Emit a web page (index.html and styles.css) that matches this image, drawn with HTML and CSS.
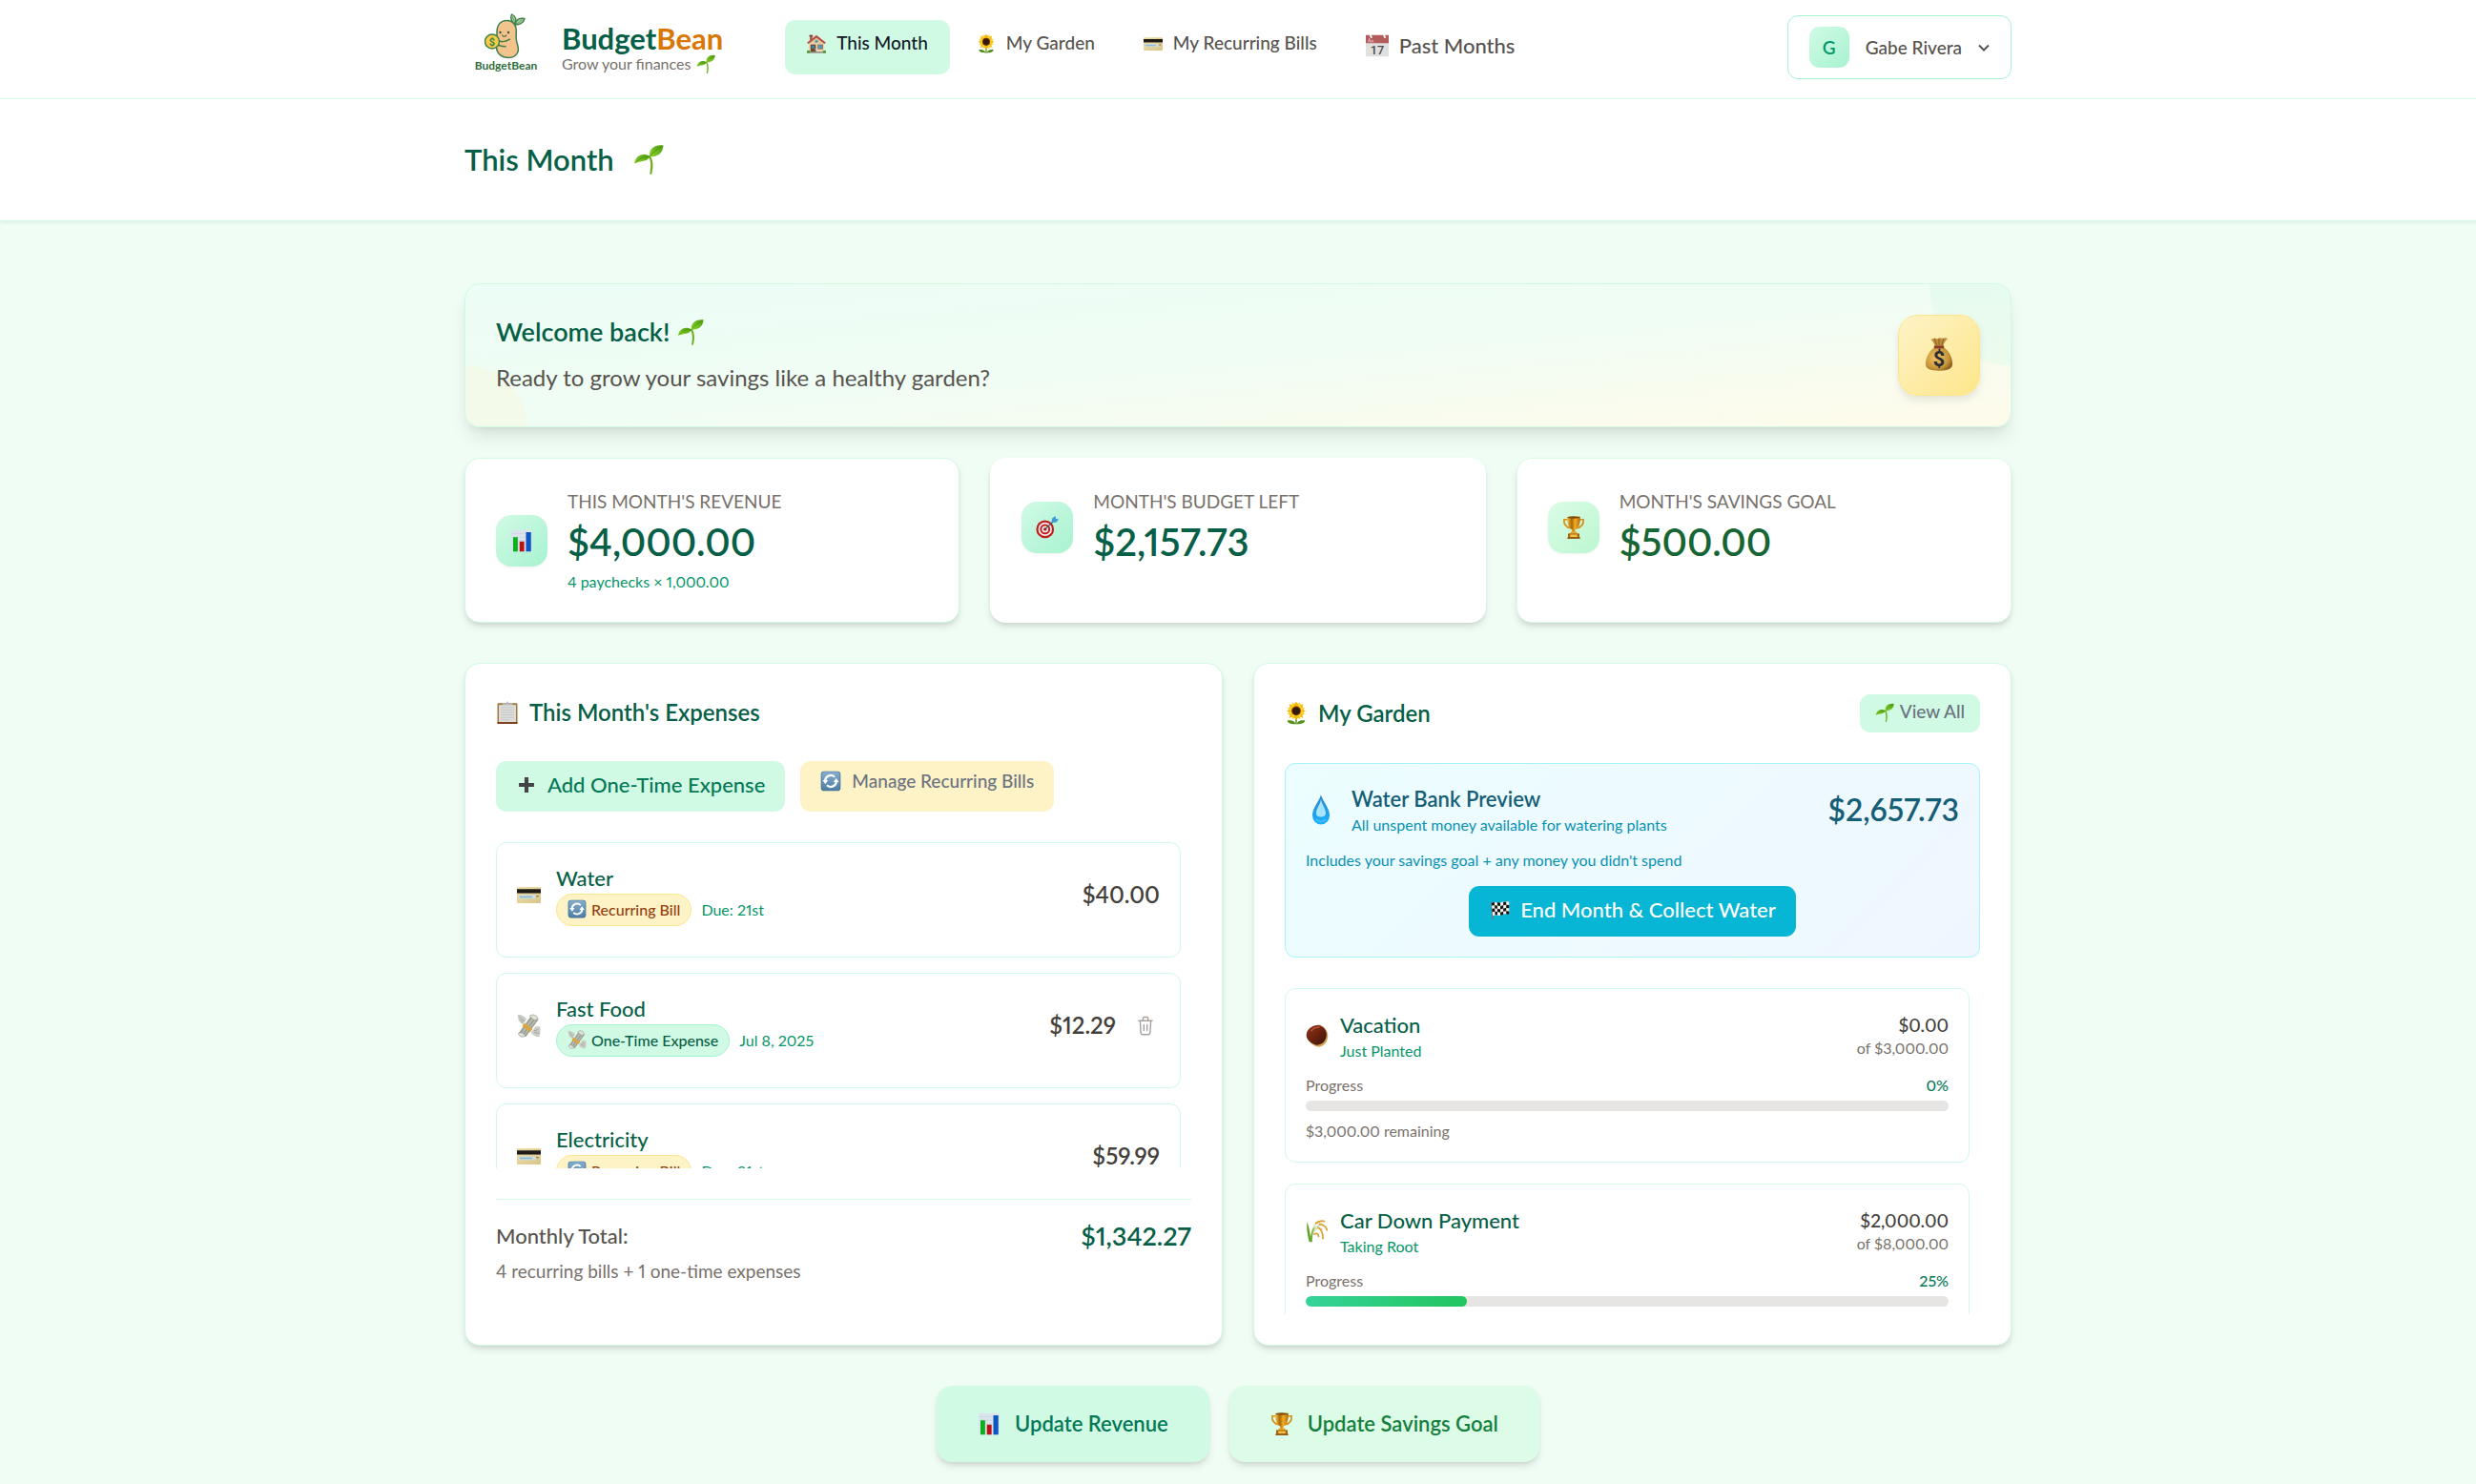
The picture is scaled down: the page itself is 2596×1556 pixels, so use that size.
FILE: index.html
```html
<!DOCTYPE html>
<html lang="en">
<head>
<meta charset="utf-8">
<meta name="viewport" content="width=device-width, initial-scale=1">
<title>BudgetBean - This Month</title>
<link rel="stylesheet" href="styles.css">
</head>
<body>
<svg class="sprite" aria-hidden="true">
  <defs>
    <linearGradient id="leafGrad" x1="0" y1="1" x2="1" y2="0"><stop offset="0" stop-color="#8ed62c"/><stop offset="1" stop-color="#4b9a10"/></linearGradient>
    <linearGradient id="dropGrad" x1="0" y1="0" x2="0" y2="1"><stop offset="0" stop-color="#2a86c8"/><stop offset="1" stop-color="#1cb1ff"/></linearGradient>
    <linearGradient id="goldGrad" x1="0" y1="0" x2="1" y2="0"><stop offset="0" stop-color="#f8c33c"/><stop offset=".35" stop-color="#a8660a"/><stop offset=".6" stop-color="#f3ad22"/><stop offset="1" stop-color="#b06c10"/></linearGradient>
    <linearGradient id="cardGrad" x1="0" y1="0" x2="1" y2="1"><stop offset="0" stop-color="#efe0a8"/><stop offset="1" stop-color="#d8c48a"/></linearGradient>
    <linearGradient id="blueGrad" x1="0" y1="0" x2="0" y2="1"><stop offset="0" stop-color="#86aecd"/><stop offset="1" stop-color="#4e7ea6"/></linearGradient>
    <radialGradient id="bagGrad" cx=".4" cy=".45" r=".65"><stop offset="0" stop-color="#f0c565"/><stop offset=".7" stop-color="#c8963c"/><stop offset="1" stop-color="#8a5c1c"/></radialGradient>
    <linearGradient id="nutGrad" x1="0" y1="0" x2="1" y2="1"><stop offset="0" stop-color="#8e3518"/><stop offset=".5" stop-color="#6a230e"/><stop offset="1" stop-color="#3b1206"/></linearGradient>
  </defs>
  <symbol id="i-seedling" viewBox="0 0 32 32">
    <path d="M16 13c2.600 5 2.800 11 1.200 18.500l2 .300C21.300 24 21 17 17.500 12z" fill="#6cae1e"/>
    <path d="M1 20.500C2.500 12 10 8.500 17.500 13 14 19.500 8.500 16.800 1 20.500z" fill="url(#leafGrad)"/>
    <path d="M17 13.500C16 5.500 22 .500 31.500 1.500 31 10.500 24.500 13.500 17 13.500z" fill="url(#leafGrad)"/>
    <path d="M17 13.500c3.500-4.500 7-7.500 12-10.500M2.500 19.500c4-4.500 9-6.500 14.500-6" fill="none" stroke="#3f8a0c" stroke-width=".7"/>
  </symbol>
  <symbol id="i-house" viewBox="0 0 32 32">
    <path d="M3 13h26v16H3z" fill="#ead9b4"/><path d="M3 13l13-8 13 8v3H3z" fill="#e2cd9f"/>
    <path d="M5 2h4v9H5z" fill="#a8554a"/><path d="M4 1h6v3H4z" fill="#8a3f36"/>
    <path d="M0 14L16 1l16 13-2.500 2L16 5.800 2.500 16z" fill="#b65246"/>
    <circle cx="16" cy="11.500" r="2.400" fill="#4a8fb5"/>
    <path d="M6 17h9v13H6z" fill="#6c4a31"/><path d="M8 19h5v5H8z" fill="#3e7fa0"/><circle cx="13.500" cy="25" r=".8" fill="#f3d27a"/>
    <path d="M18 17h9v8h-9z" fill="#8c5a3c"/><path d="M19 18h7v6h-7z" fill="#57a0c8"/><path d="M22.200 18h.9v6h-.9z" fill="#8c5a3c"/>
    <path d="M1 29h30v2.500H1z" fill="#8e8a80"/><path d="M0 27h5v4H0zM27 27h5v4h-5z" fill="#5d9a2c"/>
  </symbol>
  <symbol id="i-sunflower" viewBox="0 0 32 32">
    <path d="M15 20h2v11h-2z" fill="#5b8f1c"/>
    <path d="M15 31C11 31 5 31 3.500 26 9 24.500 14 26.500 15.500 31zM17 31c4 0 10 0 11.500-5C23 24.500 18 26.500 16.500 31z" fill="#558f1d"/>
    <g fill="#f5b80e"><path d="M16 -1l3 7h-6zM16 26l3-7h-6zM2.500 12.500l7-3v6zM29.500 12.500l-7-3v6zM6 2.500l7 3-4 4zM26 2.500l-7 3 4 4zM6 22.500l7-3-4-4zM26 22.500l-7-3 4-4z"/><circle cx="16" cy="12.500" r="10.800"/></g>
    <g fill="#ffd426"><path d="M11 0l3.500 7-5 1zM21 0l-3.500 7 5 1zM3.200 7.500l7 1-1.200 4.500zM28.800 7.500l-7 1 1.200 4.500zM3.200 17.500l7-1-1.200-4.500zM28.800 17.500l-7-1 1.200-4.500zM11 25l3.500-7-5-1zM21 25l-3.500-7 5-1z"/></g>
    <circle cx="16" cy="12.500" r="6.500" fill="#6b3a0a"/><circle cx="16" cy="12.500" r="5" fill="#371a05"/>
  </symbol>
  <symbol id="i-card" viewBox="0 0 32 32">
    <rect x="0" y="5" width="32" height="22" rx="1.500" fill="url(#cardGrad)"/><path d="M0 8h32v5.500H0z" fill="#1f1b18"/>
    <path d="M3 16h22v5H3z" fill="#c9dce0"/><path d="M4 18.500c1.500-2 2.500 2 4 0s2.500 2 4 0 2.500 2 4 0 2.500 2 4 0" fill="none" stroke="#5b9cc8" stroke-width="1.200"/><path d="M26 17.500h3" stroke="#8a6a3a" stroke-width="1.500"/>
  </symbol>
  <symbol id="i-chart" viewBox="0 0 32 32">
    <path d="M2 1h28v30H2z" fill="#dbe3ec"/><path d="M2 6h28M2 11h28M2 16h28M2 21h28M2 26h28" stroke="#c6d2e0" stroke-width=".8"/>
    <path d="M4 11h6.500v20H4z" fill="#0bb01e"/><path d="M13 17h6.500v14H13z" fill="#bd1114"/><path d="M22 4h7v27h-7z" fill="#0a56c2"/>
  </symbol>
  <symbol id="i-target" viewBox="0 0 32 32">
    <circle cx="13" cy="18.500" r="12.500" fill="#c21c1c"/><circle cx="13" cy="18.500" r="9.600" fill="#f6eeee"/><circle cx="13" cy="18.500" r="7.200" fill="#c21c1c"/><circle cx="13" cy="18.500" r="4.600" fill="#f6eeee"/><circle cx="13" cy="18.500" r="2.300" fill="#b01414"/>
    <path d="M13 18.500L25 7" stroke="#40576a" stroke-width="1.600"/><path d="M22 9l1-6 4.500-3 .5 4 4 .8-3.500 4.200z" fill="#3c9ad4"/>
  </symbol>
  <symbol id="i-trophy" viewBox="0 0 32 32">
    <path d="M8 5H2.500C2 12 6 16 12 17M24 5h5.500c.5 7-3.500 11-9.500 12" fill="none" stroke="#d3921d" stroke-width="2.300"/>
    <path d="M7 1h18c.5 9-1.500 16-7 18.500v4h-4v-4C8.500 17 6.500 10 7 1z" fill="url(#goldGrad)"/><ellipse cx="16" cy="2" rx="9" ry="1.600" fill="#7c4c08"/>
    <path d="M12 22h8l1.500 3h-11z" fill="#e8a624"/><path d="M8 24.500h16V31H8z" fill="#a8640e"/><path d="M11 26h10v3.400H11z" fill="#f2c34b"/><path d="M7 30h18v1.800H7z" fill="#8a5108"/>
  </symbol>
  <symbol id="i-clipboard" viewBox="0 0 32 32">
    <rect x="2" y="3" width="28" height="29" rx="1.500" fill="#a3763c"/><path d="M4 5.500h24v24H4z" fill="#dcdcda"/><path d="M6.500 9h19M6.500 12.500h19M6.500 16h19M6.500 19.500h19M6.500 23h19M6.500 26.500h12" stroke="#c0c0c2" stroke-width="1"/>
    <path d="M2 29.500h28V32H2z" fill="#7b3c18"/><path d="M9 5.500V3.200h5L16 0l2 3.200h5v2.300z" fill="#b6bcc0"/>
  </symbol>
  <symbol id="i-plus" viewBox="0 0 32 32"><path d="M13 4.500h6V13h8.500v6H19v8.500h-6V19H4.500v-6H13z" fill="#434347"/></symbol>
  <symbol id="i-refresh" viewBox="0 0 32 32">
    <rect x="1" y="1" width="30" height="30" rx="5" fill="#3f6c92"/><rect x="2" y="1.800" width="28" height="28" rx="4.500" fill="url(#blueGrad)"/>
    <path d="M7.500 15A8.500 8.500 0 0 1 22 9.800M24.500 17A8.500 8.500 0 0 1 10 22.200" fill="none" stroke="#fff" stroke-width="3.200"/><path d="M3.500 14.500h8.500l-4.200 6zM28.500 17.500H20l4.200-6z" fill="#fff"/>
  </symbol>
  <symbol id="i-wings" viewBox="0 0 32 32">
    <path d="M1 1c5 0 9 2 12 6l-5 7C4 13 1 8 1 1zM31 17c1 6 0 11-1 14-5 0-9-2-11-6l6-8z" fill="#c9cdc6"/><path d="M3 4l7 6M4 8l5 4M29 21l-6 2M30 26l-7-1" stroke="#8e948a" stroke-width=".8"/>
    <path d="M2 26L20 1l9 6L12 31z" fill="#b5b8ac"/><path d="M4 26L20 4M8 28L25 5M11 30L28 8" stroke="#7c8274" stroke-width="1"/>
    <path d="M10 12l11 8-3 4.500L7 16.500z" fill="#dba544"/><path d="M17 3c3-3 10-2 11 3-2 3-5 3-7 1zM2 26c3-2 8 0 9 4-3 2-9 1-9-4z" fill="#dfe1d8" stroke="#8e948a" stroke-width=".8"/>
  </symbol>
  <symbol id="i-drop" viewBox="0 0 32 32">
    <path d="M16 .5c2 7 9 13.500 9 21.500a9 9.500 0 0 1-18 0C7 14 14 7.500 16 .5z" fill="url(#dropGrad)"/><path d="M16 5c1 6 5 10 5 14.500 0 3-2 4-5 4s-5-1-5-4C11 15 15 11 16 5z" fill="#a9e4fb"/><path d="M11 26c3 3 7 3 10 0" fill="none" stroke="#57c9ff" stroke-width="1.200"/>
  </symbol>
  <symbol id="i-flag" viewBox="0 0 32 32">
    <path d="M3 5l1.800-.5L7 30H5z" fill="#777"/><path d="M4 5c5-3 9 2 14 0s8-2 13-1v19c-5-1-8-1-12 1s-8-2-13 1z" fill="#f1f1ee"/>
    <g fill="#151515"><path d="M4 5l4.500-1 .3 5-4.500.6zM13 4.500l4.500.8v4.900l-4.500-.8zM22 4l4.500-.5v4.800L22 9zM8.800 9l4.200.4v4.800l-4-.4zM17.500 10.200L22 9v4.800l-4.500 1.300zM26.500 8.300l4.500.4v4.800l-4.500-.4zM4.700 14.300l4.300-.5.3 4.700-4.200.6zM13 14.200l4.500.9v4.800l-4.500-.9zM22 13.800l4.500-.7v4.700l-4.500.8zM9.300 18.500l3.700.5v4.900l-3.500-.4zM17.500 19.900l4.500-1.300v4.700l-4.500 1.200zM26.500 17.800l4.500.4V23l-4.500-.5z"/></g>
  </symbol>
  <symbol id="i-nut" viewBox="0 0 32 32">
    <path d="M3 13C4 5 12 1 20 1c6 2 11 8 11 15 0 8-5 15-13 15.500C9 31 2 22 3 13z" fill="#cfa257"/><path d="M1 14C2 6 10 1 18 1c7 2 12 8 11 15-1 8-7 13-14 13C7 27 0 21 1 14z" fill="url(#nutGrad)"/><path d="M8 9c3-4 7-5 11-5" stroke="#b8573a" stroke-width="1.800" fill="none" stroke-linecap="round"/>
  </symbol>
  <symbol id="i-rice" viewBox="0 0 32 32">
    <path d="M5 31C2 20 1 10 2 3c3 8 5 18 5 28zM7 31c-1-8 1-16 6-22-3 8-4 14-4 22z" fill="#62a529"/>
    <g fill="none" stroke-linecap="round"><path d="M8 22C9 9 15 2 24 2M9 18C13 8 20 6 27 9M9 20c4-9 10-10 14-7" stroke="#9dbb4a" stroke-width="1"/><path d="M14 5c4-3 8-4 12-3M19 6c5 0 9 3 11 9M17 11c4 1 7 7 7 15M12 20c3-2 6 0 6 3" stroke="#dba238" stroke-width="2.400" stroke-dasharray="2.500 1.500"/></g>
  </symbol>
  <symbol id="i-trash" viewBox="0 0 24 28">
    <path d="M2.500 7h19M4.500 7l1 17a2.500 2.500 0 0 0 2.500 2.300h8a2.500 2.500 0 0 0 2.500-2.300l1-17M8.500 7V3.500A1.500 1.500 0 0 1 10 2h4a1.500 1.500 0 0 1 1.500 1.500V7M9.800 12.500v8M14.200 12.500v8" fill="none" stroke="currentColor" stroke-width="1.900" stroke-linecap="round" stroke-linejoin="round"/>
  </symbol>
</svg>

<nav class="topbar" aria-label="Main">
  <div class="container topbar-inner">
    <a class="brand" href="#">
      <svg class="brand-logo" viewBox="0 0 86 80" role="img" aria-label="BudgetBean logo">
        <path d="M34 24C34 15 39 11.500 44.500 11.500c6.500 0 10 5 9.800 11.500-.1 5-.8 8 .7 12 1.300 3.500 2.500 7 .5 10.500-2 3.600-5.500 5-9 5C39 50.500 33.500 46 33.500 39c0-5 .5-10 .5-15z" fill="#f2c48b" stroke="#3f7d4c" stroke-width="1.500"/>
        <path d="M53 15.500C49.500 13 47.500 9.500 49.500 5c4 1.500 5.500 5.500 3.500 10.500zM53 15.500c1-5 4.500-7 10-6-1 4.500-5 7-10 6z" fill="#a8d59c" stroke="#3f7d4c" stroke-width="1.300"/>
        <path d="M53 15.500c-.5-3-2-6-3-8M53 15.500c3-1 5-3 7.500-4.500" stroke="#3f7d4c" stroke-width=".7" fill="none"/>
        <circle cx="37.500" cy="24" r="1.200" fill="#35513b"/><circle cx="46" cy="24" r="1.200" fill="#35513b"/><path d="M39.500 26.500c.5 2.400 4 2.400 4.500 0" stroke="#35513b" stroke-width="1.100" fill="none"/>
        <circle cx="29" cy="33.500" r="7.500" fill="#f7cd46" stroke="#3f7d4c" stroke-width="1.400"/><text x="29" y="37.500" text-anchor="middle" class="coin-sign">$</text>
        <path d="M36.500 33c3 1.200 7 .6 11-1.800M36 37.500c3 1 5 1.200 7 1.200" stroke="#3f7d4c" stroke-width="1.400" fill="none" stroke-linecap="round"/>
        <text x="43.500" y="63" text-anchor="middle" class="logo-word">BudgetBean</text>
      </svg>
      <span class="brand-text">
        <span class="brand-name">Budget<span class="brand-accent">Bean</span></span>
        <span class="brand-tag">Grow your finances <svg class="ico-20"><use href="#i-seedling"/></svg></span>
      </span>
    </a>
    <div class="nav-links">
      <a class="nav-link active" href="#" aria-current="page"><svg class="ico-20"><use href="#i-house"/></svg>This Month</a>
      <a class="nav-link" href="#"><svg class="ico-20"><use href="#i-sunflower"/></svg>My Garden</a>
      <a class="nav-link" href="#"><svg class="ico-20"><use href="#i-card"/></svg>My Recurring Bills</a>
      <a class="nav-link large" href="#"><svg class="ico-24" viewBox="0 0 32 32">
        <path d="M0 1h32v12H0z" fill="#b25c5c"/><path d="M0 12.500h32V31H0z" fill="#e0e0de"/>
        <path d="M6 0l2 5M25 0l2 5" stroke="#fff" stroke-width="2.600"/><path d="M3 11c2-1 1-5 2-5s0 5 2 5 1-3 2-3 0 3 2 3" fill="none" stroke="#f1d4d4" stroke-width="1"/>
        <text x="16" y="28" text-anchor="middle" class="cal-day">17</text></svg>Past Months</a>
    </div>
    <button class="user-menu" type="button" aria-haspopup="true"><span class="avatar">G</span>Gabe Rivera
      <svg class="chevron" viewBox="0 0 12 8"><path d="M1 1.500l5 5 5-5" fill="none" stroke="currentColor" stroke-width="2"/></svg>
    </button>
  </div>
</nav>

<header class="page-header">
  <div class="container"><h1>This Month <svg class="ico-32"><use href="#i-seedling"/></svg></h1></div>
</header>

<main class="container">
  <section class="welcome">
    <div>
      <h2>Welcome back! <svg class="ico-28"><use href="#i-seedling"/></svg></h2>
      <p>Ready to grow your savings like a healthy garden?</p>
    </div>
    <div class="money-tile"><svg viewBox="0 0 32 40">
      <path d="M6.500 3.500c2.500 1 4-2 6-.6 2 1.300 3.500-1.500 5.500-.6 2.400 1 4.500-1.400 7.500.5-2 2.500-4.500 5-5 9.200h-9C11 8 9 6 6.500 3.500z" fill="#c08f3e"/>
      <path d="M11 3.500l2.500 7M16 3v7M21 3.500l-2 7" stroke="#7c561c" stroke-width=".9"/>
      <path d="M11 12.500h10c6 4.500 10 11.500 10 18.500 0 6-5 7.800-15 7.800S1 37 1 31c0-7 4-14 10-18.500z" fill="url(#bagGrad)"/>
      <path d="M10.500 10.800h11v3h-11z" fill="#8c3c26"/>
      <text x="16" y="34" text-anchor="middle" class="bag-sign">$</text></svg></div>
  </section>

  <section class="stats" aria-label="Summary">
    <div class="stat">
      <div class="stat-icon"><svg class="ico-24"><use href="#i-chart"/></svg></div>
      <div><div class="stat-label">THIS MONTH'S REVENUE</div><div class="stat-value">$4,000.00</div><div class="stat-note">4 paychecks × 1,000.00</div></div>
    </div>
    <div class="stat plain">
      <div class="stat-icon"><svg class="ico-24"><use href="#i-target"/></svg></div>
      <div><div class="stat-label">MONTH'S BUDGET LEFT</div><div class="stat-value">$2,157.73</div></div>
    </div>
    <div class="stat goal">
      <div class="stat-icon"><svg class="ico-24"><use href="#i-trophy"/></svg></div>
      <div><div class="stat-label">MONTH'S SAVINGS GOAL</div><div class="stat-value">$500.00</div></div>
    </div>
  </section>

  <div class="panels">
    <section class="panel">
      <div class="panel-head"><h3><svg class="ico-24"><use href="#i-clipboard"/></svg>This Month's Expenses</h3></div>
      <div class="actions">
        <button class="btn" type="button"><svg class="ico-22"><use href="#i-plus"/></svg>Add One-Time Expense</button>
        <a class="btn amber" href="#"><svg class="ico-22"><use href="#i-refresh"/></svg>Manage Recurring Bills</a>
      </div>
      <ul class="list expenses">
        <li class="item">
          <div class="expense">
            <svg class="ico-25"><use href="#i-card"/></svg>
            <div class="grow"><div class="item-name">Water</div>
              <div class="meta"><span class="pill amber"><svg class="ico-20"><use href="#i-refresh"/></svg>Recurring Bill</span><span class="small green">Due: 21st</span></div></div>
            <span class="amount">$40.00</span>
          </div>
        </li>
        <li class="item">
          <div class="expense">
            <svg class="ico-25"><use href="#i-wings"/></svg>
            <div class="grow"><div class="item-name">Fast Food</div>
              <div class="meta"><span class="pill"><svg class="ico-20"><use href="#i-wings"/></svg>One-Time Expense</span><span class="small green">Jul 8, 2025</span></div></div>
            <span class="amount">$12.29</span>
            <button class="delete" type="button" aria-label="Delete Fast Food"><svg><use href="#i-trash"/></svg></button>
          </div>
        </li>
        <li class="item">
          <div class="expense">
            <svg class="ico-25"><use href="#i-card"/></svg>
            <div class="grow"><div class="item-name">Electricity</div>
              <div class="meta"><span class="pill amber"><svg class="ico-20"><use href="#i-refresh"/></svg>Recurring Bill</span><span class="small green">Due: 21st</span></div></div>
            <span class="amount">$59.99</span>
          </div>
        </li>
      </ul>
      <div class="total">
        <div class="row"><span class="total-label">Monthly Total:</span><span class="total-value">$1,342.27</span></div>
        <p>4 recurring bills + 1 one-time expenses</p>
      </div>
    </section>

    <section class="panel">
      <div class="panel-head"><h3><svg class="ico-24"><use href="#i-sunflower"/></svg>My Garden</h3>
        <a class="view-all" href="#"><svg class="ico-20"><use href="#i-seedling"/></svg>View All</a></div>
      <div class="water">
        <div class="water-top">
          <svg class="ico-32"><use href="#i-drop"/></svg>
          <div class="grow"><h4>Water Bank Preview</h4><div class="small">All unspent money available for watering plants</div></div>
          <span class="water-value">$2,657.73</span>
        </div>
        <div class="small water-note">Includes your savings goal + any money you didn't spend</div>
        <button class="btn cyan" type="button"><svg class="ico-22"><use href="#i-flag"/></svg>End Month &amp; Collect Water</button>
      </div>
      <ul class="list plants">
        <li class="item">
          <div class="plant">
            <svg class="ico-24"><use href="#i-nut"/></svg>
            <div class="grow"><div class="item-name">Vacation</div><div class="small green">Just Planted</div></div>
            <div class="saved"><div class="saved-now">$0.00</div><div class="small">of $3,000.00</div></div>
          </div>
          <div class="row small progress-head"><span>Progress</span><span class="percent">0%</span></div>
          <div class="bar" role="progressbar" aria-label="Vacation" aria-valuenow="0"><div class="bar-fill" style="width:0%"></div></div>
          <div class="small remaining">$3,000.00 remaining</div>
        </li>
        <li class="item">
          <div class="plant">
            <svg class="ico-24"><use href="#i-rice"/></svg>
            <div class="grow"><div class="item-name">Car Down Payment</div><div class="small green">Taking Root</div></div>
            <div class="saved"><div class="saved-now">$2,000.00</div><div class="small">of $8,000.00</div></div>
          </div>
          <div class="row small progress-head"><span>Progress</span><span class="percent">25%</span></div>
          <div class="bar" role="progressbar" aria-label="Car Down Payment" aria-valuenow="25"><div class="bar-fill" style="width:25%"></div></div>
        </li>
      </ul>
    </section>
  </div>

  <div class="footer-actions">
    <button class="big-btn" type="button"><svg class="ico-24"><use href="#i-chart"/></svg>Update Revenue</button>
    <button class="big-btn goal" type="button"><svg class="ico-24"><use href="#i-trophy"/></svg>Update Savings Goal</button>
  </div>
</main>
</body>
</html>
```
FILE: styles.css
```css
* { box-sizing: border-box; }
body, h1, h2, h3, h4, p, ul { margin: 0; padding: 0; }
ul { list-style: none; }
body { background: #f0fdf4; color: #57534e; font: 400 16px/21px Lato, "Liberation Sans", sans-serif; font-variant-numeric: proportional-nums; }
a { color: inherit; text-decoration: none; }
button { border: 0; background: none; color: inherit; font: inherit; cursor: pointer; }
svg { flex: none; display: block; }
.sprite { position: absolute; width: 0; height: 0; }
.container { width: min(1622px, 100% - 64px); margin: 0 auto; }
.grow { flex: 1; }
.row { display: flex; justify-content: space-between; }

.ico-20 { width: 20px; height: 20px; }
.ico-22 { width: 22px; height: 22px; }
.ico-24 { width: 24px; height: 24px; }
.ico-25 { width: 25px; height: 25px; }
.ico-28 { width: 28px; height: 28px; }
.ico-32 { width: 32px; height: 32px; }
.cal-day { font: 500 17px Roboto, sans-serif; fill: #4a4a4a; }
.bag-sign { font: 700 23px Roboto, sans-serif; fill: #2b2d33; }
.coin-sign { font: 700 11px Roboto, sans-serif; fill: #3f7d4c; }
.logo-word { font: 700 12px Lato, sans-serif; fill: #2f6d3a; }

/* Top navigation */
.topbar { background: #fff; border-bottom: 1px solid #d1fae5; padding-bottom: 4px; }
.topbar-inner { display: flex; align-items: center; min-height: 99px; }
.brand { display: flex; align-items: center; gap: 16px; }
.brand-logo { width: 86px; height: 80px; }
.brand-text { display: block; padding-top: 2px; }
.brand-name { display: block; font-size: 31px; line-height: 33px; font-weight: 700; color: #065f46; }
.brand-accent { color: #d97706; }
.brand-tag { display: flex; align-items: center; gap: 6px; line-height: 20px; color: #78716c; }
.nav-links { display: flex; gap: 5px; margin-left: 65px; min-height: 57px; }
.nav-link { display: flex; align-items: flex-start; gap: 11px; padding: 11px 23px; border-radius: 11px; font-size: 19px; line-height: 26px; font-weight: 500; }
.nav-link svg { margin-top: 4px; }
.nav-link.active { background: #d1fae5; color: #111827; }
.nav-link.large { font-size: 22px; line-height: 32px; }
.user-menu { display: flex; align-items: center; gap: 17px; margin-left: auto; padding: 11px 22px; border: 1px solid #a7f3d0; border-radius: 11px; background: #fff; font-size: 19px; line-height: 26px; font-weight: 500; }
.avatar { display: grid; place-items: center; width: 42px; height: 43px; border-radius: 11px; background: linear-gradient(135deg, #d1fae5, #a7f3d0); color: #059669; font-weight: 600; }
.chevron { width: 12px; height: 8px; }

.page-header { background: #fff; padding: 42px 0 43px; border-bottom: 1px solid #d1fae5; box-shadow: 0 2px 3px rgba(6, 95, 70, .07); }
h1 { display: flex; align-items: center; gap: 20px; font-size: 31px; line-height: 42px; font-weight: 600; color: #065f46; }

main { padding: 65px 0 22px; }

/* Welcome banner */
.welcome { position: relative; overflow: hidden; display: flex; justify-content: space-between; padding: 32px; border: 1px solid #d1fae5; border-radius: 16px; background: linear-gradient(175deg, #ecfdf5, #f0fdf4 50%, #fffbeb); box-shadow: 0 13px 20px -4px rgba(0, 0, 0, .1), 0 5px 8px -5px rgba(0, 0, 0, .1); }
.welcome::before, .welcome::after { content: ""; position: absolute; border-radius: 50%; }
.welcome::before { width: 170px; height: 170px; top: -85px; right: -85px; background: #d1fae5; opacity: .3; }
.welcome::after { width: 128px; height: 128px; bottom: -64px; left: -64px; background: #fef3c7; opacity: .25; }
.welcome > div { position: relative; z-index: 1; }
h2 { display: flex; align-items: center; gap: 8px; margin-bottom: 12px; font-size: 27px; line-height: 36px; font-weight: 600; color: #065f46; }
.welcome p { font-size: 24px; line-height: 36px; }
.money-tile { display: grid; place-items: center; width: 86px; height: 85px; padding-bottom: 4px; border: 1px solid #fde68a; border-radius: 21px; background: linear-gradient(135deg, #fef3c7, #fde68a); box-shadow: 0 5px 8px -1px rgba(0, 0, 0, .1); }
.money-tile svg { width: 30px; height: 38px; }

/* Summary cards */
.stats { display: grid; grid-template-columns: repeat(3, 1fr); gap: 32px; margin-top: 32px; }
.stat { display: flex; align-items: center; gap: 21px; padding: 32px; border: 1px solid #d1fae5; border-radius: 16px; background: #fff; box-shadow: 0 5px 8px -1px rgba(0, 0, 0, .1), 0 3px 5px -2px rgba(0, 0, 0, .1); }
.stat:not(:first-child) { padding-bottom: 60px; }
.stat.plain { border-color: #fff; }
.stat.goal { border-color: #dcfce7; }
.stat-icon { display: grid; place-items: center; width: 54px; height: 54px; border-radius: 16px; background: linear-gradient(135deg, #d1fae5, #a7f3d0); box-shadow: 0 1px 3px rgba(0, 0, 0, .06); }
.goal .stat-icon { background: linear-gradient(135deg, #dcfce7, #bbf7d0); }
.stat-label { margin-bottom: 5px; font-size: 19px; line-height: 26px; color: #78716c; }
.stat-value { font-size: 40px; line-height: 48px; font-weight: 600; color: #065f46; }
.goal .stat-value { color: #166534; }
.stat-note { margin-top: 7px; color: #059669; }

/* Panels */
.panels { display: grid; grid-template-columns: 1fr 1fr; gap: 32px; margin-top: 42px; }
.panel { padding: 32px; border: 1px solid #d1fae5; border-radius: 16px; background: #fff; box-shadow: 0 5px 8px -1px rgba(0, 0, 0, .1), 0 3px 5px -2px rgba(0, 0, 0, .1); }
.panel-head { display: flex; align-items: center; justify-content: space-between; margin-bottom: 32px; }
h3 { display: flex; align-items: center; gap: 11px; font-size: 24px; line-height: 38px; font-weight: 600; color: #065f46; }
.view-all { display: flex; align-items: flex-start; gap: 6px; padding: 5px 16px 9px; border-radius: 11px; background: #d1fae5; color: #6b7280; font-size: 19px; line-height: 26px; font-weight: 500; }
.view-all svg { margin-top: 4px; }
.actions { display: flex; gap: 16px; margin-bottom: 32px; }
.btn { display: flex; gap: 11px; padding: 11px 21px 14px; border-radius: 11px; background: #d1fae5; color: #047857; font-size: 22px; line-height: 28px; font-weight: 500; }
.btn svg { margin-top: 3px; }
.btn.amber { padding: 7px 21px; background: #fef3c7; color: #6b7280; font-size: 19px; }
.btn.cyan { margin: 17px auto 0; background: #06b6d4; color: #fff; }

.list { display: flex; flex-direction: column; overflow: hidden; padding-right: 11px; }
.item { flex: none; padding: 21px; border: 1px solid #d1fae5; border-radius: 11px; }
.item-name { font-size: 22px; line-height: 32px; font-weight: 500; color: #065f46; }
.small { font-size: 16px; line-height: 21px; }
.green { color: #059669; }

.expenses { height: 342px; gap: 16px; }
.expense { display: flex; align-items: center; gap: 16px; padding-bottom: 11px; }
.meta { display: flex; align-items: center; gap: 10px; }
.meta .small { padding-bottom: 2px; }
.pill { display: flex; align-items: center; gap: 5px; height: 34px; padding: 0 11px 2px; border: 1px solid #a7f3d0; border-radius: 17px; background: #d1fae5; color: #065f46; font-weight: 500; }
.pill.amber { border-color: #fde68a; background: #fef3c7; color: #92400e; }
.amount { font-size: 24px; line-height: 32px; font-weight: 600; color: #44403c; }
.delete { padding: 6px; color: #a8a29e; }
.delete svg { width: 18px; height: 21px; }
.total { margin-top: 32px; padding-top: 22px; border-top: 1px solid #d1fae5; }
.total-label { font-size: 22px; line-height: 32px; font-weight: 500; }
.total-value { font-size: 27px; line-height: 32px; font-weight: 600; color: #065f46; }
.total p { margin-top: 8px; font-size: 19px; line-height: 26px; color: #78716c; }

/* Garden */
.water { margin-bottom: 32px; padding: 21px; border: 1px solid #a5f3fc; border-radius: 11px; background: linear-gradient(135deg, #ecfeff, #eff6ff); color: #0891b2; }
.water-top { display: flex; align-items: center; gap: 16px; }
h4 { font-size: 22px; line-height: 32px; font-weight: 600; color: #155e75; }
.water-value { font-size: 32px; line-height: 42px; font-weight: 600; color: #155e75; }
.water-note { margin-top: 16px; }
.plants { height: 342px; gap: 22px; }
.plants .item { padding: 22px 21px; }
.plant { display: flex; align-items: center; gap: 12px; }
.saved { text-align: right; color: #78716c; }
.saved-now { font-size: 19px; line-height: 26px; font-weight: 500; color: #44403c; }
.progress-head { margin-top: 15px; color: #78716c; }
.percent { font-weight: 500; color: #047857; }
.bar { height: 11px; margin-top: 6px; border-radius: 6px; background: #e7e5e4; overflow: hidden; }
.bar-fill { height: 100%; border-radius: 6px; background: linear-gradient(90deg, #34d399, #22c55e); }
.remaining { margin-top: 10px; color: #78716c; }

.footer-actions { display: flex; justify-content: center; gap: 21px; margin-top: 42px; }
.big-btn { display: flex; align-items: center; gap: 15px; min-height: 80px; padding: 0 43px; border-radius: 16px; background: #d1fae5; color: #047857; font-size: 22px; line-height: 28px; font-weight: 600; box-shadow: 0 5px 8px -1px rgba(0, 0, 0, .1), 0 3px 5px -2px rgba(0, 0, 0, .1); }
.big-btn.goal { background: #dcfce7; color: #15803d; }
```
